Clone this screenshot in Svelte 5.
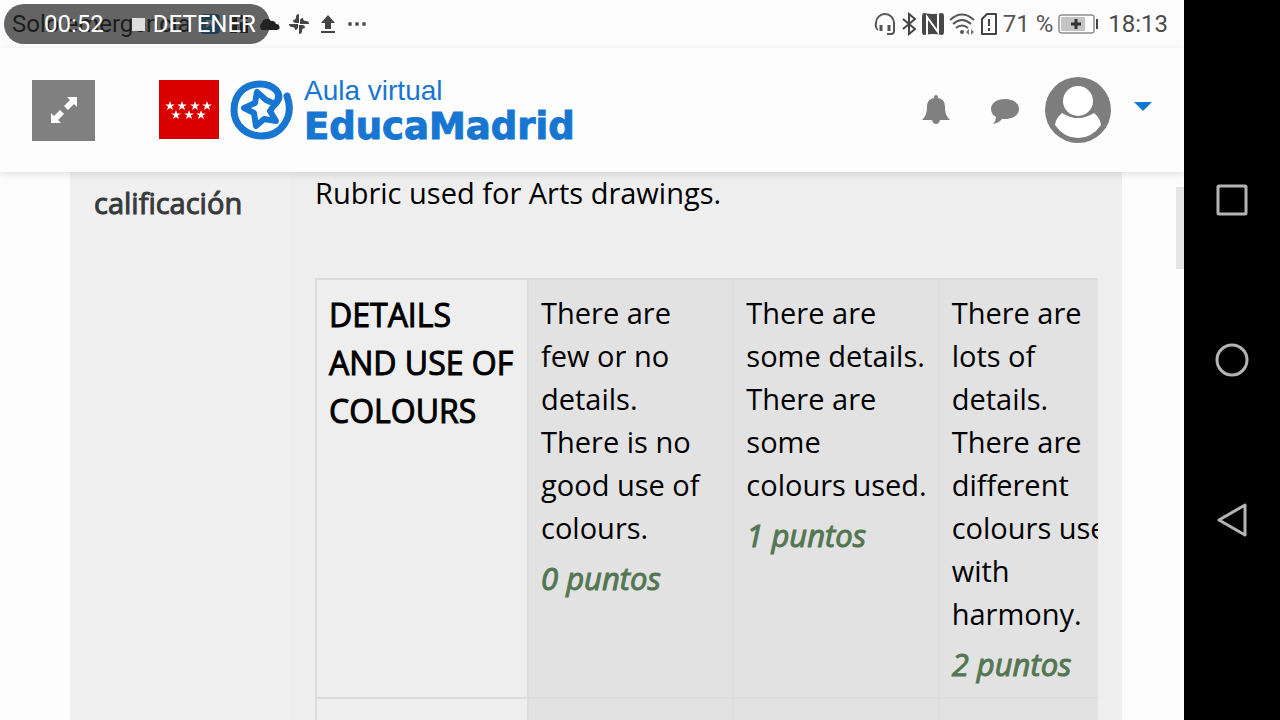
<script lang="ts">
	const levels = [
		{ text: 'There are few or no details. There is no good use of colours.', score: 0 },
		{ text: 'There are some details. There are some colours\u00a0used.', score: 1 },
		{ text: 'There are lots of details. There are different colours\u00a0used with harmony.', score: 2 }
	];

	const star = '0,-5 1.2,-1.6 4.8,-1.6 1.9,0.6 3,4 0,1.9 -3,4 -1.9,0.6 -4.8,-1.6 -1.2,-1.6';
	const flagStars = [
		[11, 26], [23, 26], [36, 26], [48, 26],
		[17, 35], [30, 35], [42, 35]
	];
</script>

<div class="device">
	<div class="screen">
		<div class="status-bar">
			<div class="notifications">
				<span class="carrier">Solo emergencia</span>
				<svg width="20" height="20" viewBox="0 0 20 20">
					<rect width="20" height="20" rx="4" fill="#1787c9" />
					<path d="M6 13l6-6M12 13V7H6" stroke="#fff" stroke-width="2" fill="none" />
				</svg>
				<svg width="20" height="20" viewBox="0 0 20 20" fill="#222">
					<path d="M1 1h7v7H1zM11 1h8v4h-8zM1 11h7v8H1zM11 8h8v11h-8z" />
				</svg>
				<svg width="22" height="20" viewBox="0 0 22 20" fill="#222">
					<path d="M4 16a4 4 0 0 1 0-7 5 5 0 0 1 9-2 4 4 0 0 1 5 3 3 3 0 0 1 1 6z" />
				</svg>
				<svg width="20" height="20" viewBox="0 0 20 20" fill="#444">
					<path d="M10 0v9H7Q4 9 4 6q3 0 3-3 0-3 3-3zM20 10h-9V7q0-3 3-3 0 3 3 3 3 0 3 3zM10 20v-9h3q3 0 3 3-3 0-3 3 0 3-3 3zM0 10h9v3q0 3-3 3 0-3-3-3-3 0-3-3z" />
				</svg>
				<svg width="20" height="20" viewBox="0 0 20 20" fill="#444">
					<path d="M10 1l7 8h-4v6H7V9H3zM3 17h14v2H3z" />
				</svg>
				<svg width="20" height="20" viewBox="0 0 20 20" fill="#555">
					<circle cx="3" cy="10" r="2" /><circle cx="10" cy="10" r="2" /><circle cx="17" cy="10" r="2" />
				</svg>
			</div>
			<button class="recorder">
				<span>00:52</span>
				<span class="stop"></span>
				<span>DETENER</span>
			</button>
			<div class="system">
				<svg width="22" height="24" viewBox="0 0 22 24" fill="none" stroke="#555" stroke-width="2">
					<path d="M4 18Q1 16 2 11A9 9 0 0 1 20 11V19q0 3-3 3h-4" />
					<path d="M7 13v6M15 13v6" stroke-width="3" />
				</svg>
				<svg width="16" height="24" viewBox="0 0 16 24" fill="none" stroke="#444" stroke-width="2">
					<path d="M2 7l12 10-6 5V2l6 5L2 17" />
				</svg>
				<svg width="22" height="24" viewBox="0 0 22 24">
					<path d="M2 1Q11 3 20 1q2 0 2 4v14q0 4-2 4-9-2-18 0-2 0-2-4V5q0-4 2-4z" fill="#484848" />
					<path d="M5 23V5l11 15V1" fill="none" stroke="#fff" stroke-width="2" />
				</svg>
				<svg width="26" height="24" viewBox="0 0 26 24" fill="none" stroke="#555" stroke-width="2">
					<path d="M1 8q12-11 24 0M4 12q9-8 18 0M7 16q6-5 12 0" />
					<circle cx="13" cy="20" r="2" fill="#555" stroke="none" />
					<path d="M17 20l3-3v6zM22 17l3 3-3 3z" fill="#777" stroke="none" />
				</svg>
				<svg width="18" height="24" viewBox="0 0 18 24" fill="none" stroke="#444" stroke-width="2">
					<path d="M7 2h9v20H2V7z" stroke-linejoin="round" />
					<path d="M9 7v7M9 16v3" />
				</svg>
				<span class="percent">71 %</span>
				<svg class="battery" width="41" height="20" viewBox="0 0 41 20">
					<rect x="1" y="1" width="35" height="18" rx="2" fill="none" stroke="#555" />
					<rect x="3" y="3" width="24" height="14" fill="#c4c4c4" />
					<path d="M18 5v10M13 10h10" stroke="#333" stroke-width="3" />
					<path d="M39 5v10" stroke="#444" stroke-width="2" />
				</svg>
				<span class="clock">18:13</span>
			</div>
		</div>

		<header class="navbar">
			<button class="expand" aria-label="Ampliar">
				<svg width="28" height="28" viewBox="0 0 28 28" fill="#fff">
					<path d="M17 1h10v10l-3-3-6 6-4-4 6-6zM11 27H1V17l3 3 6-6 4 4-6 6z" />
				</svg>
			</button>
			<a class="brand" href="#inicio">
				<svg class="flag" width="60" height="60" viewBox="0 0 60 60">
					<rect width="60" height="59" fill="#d80000" />
					{#each flagStars as [x, y]}
						<polygon points={star} fill="#fff" transform="translate({x} {y})" />
					{/each}
				</svg>
				<svg width="64" height="60" viewBox="0 0 64 60" fill="none" stroke="#1676d2" stroke-linecap="round" stroke-linejoin="round">
					<path d="M45 24Q52 17 46 10C42 6 37 4 30 4C14 4 4 15 4 30C4 45 16 56 32 56C50 56 65 38 57 16" stroke-width="7" />
					<path d="M45 24L36 20L27 12L25 23L14 28L24 33L26 46L34 39L46 41L40 31L45 24" stroke-width="6" />
				</svg>
				<span class="brand-text">
					<span class="aula">Aula virtual</span>
					<span class="educa">EducaMadrid</span>
				</span>
			</a>
			<nav class="user-menu">
				<button class="icon-button" aria-label="Notificaciones">
					<svg width="28" height="30" viewBox="0 0 28 30" fill="#808080">
						<path d="M14 0q2 0 2 3c5 1 7 4 7 9 0 5 1 9 5 13H0c4-4 5-8 5-13 0-5 2-8 7-9q0-3 2-3zM10 25h8q-1 4-4 4t-4-4z" />
					</svg>
				</button>
				<button class="icon-button" aria-label="Mensajes">
					<svg width="30" height="28" viewBox="0 0 30 28" fill="#808080">
						<path d="M15 3c8 0 14 4 14 10s-6 10-14 10h-3Q9 27 3 28q3-3 3-7Q1 18 1 13C1 7 7 3 15 3z" />
					</svg>
				</button>
				<button class="icon-button profile" aria-label="Menú de usuario">
					<svg width="68" height="68" viewBox="0 0 68 68">
						<circle cx="34" cy="34" r="33" fill="#7d7d7d" />
						<path d="M18 37Q34 47 50 37Q56 42 57 49Q48 62 34 62T11 49Q12 42 18 37z" fill="#fff" />
						<circle cx="34" cy="25" r="17" fill="#7d7d7d" />
						<circle cx="34" cy="25" r="15" fill="#fff" />
					</svg>
					<svg class="caret" width="18" height="10" viewBox="0 0 18 10" fill="#1177d1"><path d="M0 0h18L9 9z" /></svg>
				</button>
			</nav>
		</header>

		<main class="page">
			<section class="grading">
				<h2 class="grading-label">calificación</h2>
				<div class="grading-body">
					<p class="description">Rubric used for Arts drawings.</p>
					<div class="rubric-scroll">
						<table class="rubric">
							<tbody>
								<tr class="criterion">
									<th scope="row">DETAILS AND USE OF COLOURS</th>
									{#each levels as level}
										<td>
											<div>{level.text}</div>
											<div class="score">{level.score} puntos</div>
										</td>
									{/each}
								</tr>
								<tr class="criterion">
									<th></th>
									<td></td>
									<td></td>
									<td></td>
								</tr>
							</tbody>
						</table>
					</div>
				</div>
			</section>
			<div class="drawer-tab"></div>
		</main>
	</div>

	<nav class="soft-keys">
		<button aria-label="Recientes">
			<svg width="32" height="32" viewBox="0 0 32 32"><rect x="2" y="2" width="28" height="28" rx="1" /></svg>
		</button>
		<button aria-label="Inicio">
			<svg width="34" height="34" viewBox="0 0 34 34"><circle cx="17" cy="17" r="15" /></svg>
		</button>
		<button aria-label="Atrás">
			<svg width="32" height="34" viewBox="0 0 32 34"><path d="M29 2v30L3 17z" /></svg>
		</button>
	</nav>
</div>

<style>
	:global(body) {
		margin: 0;
		overflow: hidden;
	}

	svg {
		display: block;
		flex: none;
	}

	button {
		border: none;
		padding: 0;
		background: none;
		font: inherit;
		cursor: pointer;
	}

	.device {
		display: flex;
		height: 100vh;
		background: #000;
		font-family: 'Open Sans', 'Noto Sans', sans-serif;
	}

	.screen {
		flex: 1;
		min-width: 0;
		display: flex;
		flex-direction: column;
		background: #fdfdfd;
	}

	/* Android status bar */
	.status-bar {
		position: relative;
		z-index: 2;
		display: flex;
		justify-content: space-between;
		align-items: center;
		height: 48px;
		padding: 0 16px 0 12px;
		font-family: Roboto, sans-serif;
		font-size: 24px;
		color: #4a4a4a;
	}

	.notifications,
	.system {
		display: flex;
		align-items: center;
	}

	.notifications {
		gap: 9px;
	}

	.carrier {
		color: #111;
	}

	.system {
		gap: 5px;
	}

	.clock {
		margin-left: 4px;
	}

	.percent {
		color: #555;
	}

	.recorder {
		position: absolute;
		top: 4px;
		left: 4px;
		display: flex;
		align-items: center;
		width: 266px;
		height: 40px;
		padding-left: 40px;
		border-radius: 20px;
		background: rgba(34, 34, 34, 0.7);
		color: #fff;
	}

	.stop {
		width: 13px;
		height: 13px;
		margin: 0 8px 0 28px;
		background: #ddd;
	}

	.navbar {
		position: relative;
		z-index: 1;
		display: flex;
		align-items: center;
		height: 124px;
		padding: 0 32px;
		background: #fdfdfd;
		box-shadow: 0 2px 8px rgba(0, 0, 0, 0.12);
	}

	.expand {
		display: grid;
		place-items: center;
		width: 63px;
		height: 61px;
		background: #808080;
	}

	.brand {
		display: flex;
		align-items: center;
		margin-left: 64px;
		color: #1676d2;
		font-family: 'Liberation Sans', Arial, sans-serif;
		text-decoration: none;
	}

	.flag {
		margin-right: 11px;
	}

	.brand-text {
		display: flex;
		flex-direction: column;
		margin-left: 10px;
	}

	.aula {
		font-size: 28px;
		line-height: 34px;
	}

	.educa {
		font-family: 'DejaVu Sans', sans-serif;
		font-size: 37px;
		font-weight: 700;
		line-height: 38px;
		-webkit-text-stroke: 1px;
	}

	.user-menu {
		display: flex;
		align-items: center;
		gap: 40px;
		margin-left: auto;
	}

	.profile {
		display: flex;
		align-items: center;
		gap: 22px;
		margin-left: -16px;
	}

	.caret {
		margin-bottom: 6px;
	}

	.page {
		position: relative;
		flex: 1;
		min-height: 0;
		overflow: hidden;
		padding: 0 62px 0 70px;
	}

	.grading {
		display: flex;
		min-height: 100%;
		background: #eee;
	}

	.grading-label {
		box-sizing: border-box;
		flex: none;
		width: 220px;
		margin: 0;
		padding: 10px 24px;
		background: #f0f0f0;
		color: #373a3c;
		font-size: 29px;
		font-weight: 400;
		line-height: 42px;
		-webkit-text-stroke: 1px;
	}

	.grading-body {
		flex: 1;
		min-width: 0;
		padding: 0 24px 0 25px;
	}

	.description {
		margin: 0 0 64px;
		font-size: 29px;
		line-height: 42px;
	}

	.rubric-scroll {
		overflow: hidden;
	}

	.rubric {
		width: 830px;
		table-layout: fixed;
		border-collapse: collapse;
		font-size: 29px;
		line-height: 43px;
	}

	.criterion th,
	.criterion td {
		box-sizing: border-box;
		height: 60px;
		padding: 11px 12px;
		border: 2px solid #dcdcdc;
		text-align: left;
		vertical-align: top;
	}

	.criterion th {
		width: 212px;
		font-size: 32px;
		font-weight: 400;
		line-height: 48px;
		-webkit-text-stroke: 1px;
	}

	.criterion td {
		background: #e2e2e2;
	}

	.score {
		margin-top: 8px;
		color: #537653;
		font-size: 31px;
		font-style: italic;
		-webkit-text-stroke: 1px;
	}

	.drawer-tab {
		position: absolute;
		top: 15px;
		right: 0;
		width: 8px;
		height: 82px;
		background: #e6e6e6;
	}

	.soft-keys {
		display: flex;
		flex-direction: column;
		justify-content: center;
		align-items: center;
		width: 96px;
	}

	.soft-keys button {
		display: grid;
		place-items: center;
		width: 96px;
		height: 160px;
	}

	.soft-keys svg {
		fill: none;
		stroke: #b4b4b4;
		stroke-width: 3;
		stroke-linejoin: round;
	}
</style>
